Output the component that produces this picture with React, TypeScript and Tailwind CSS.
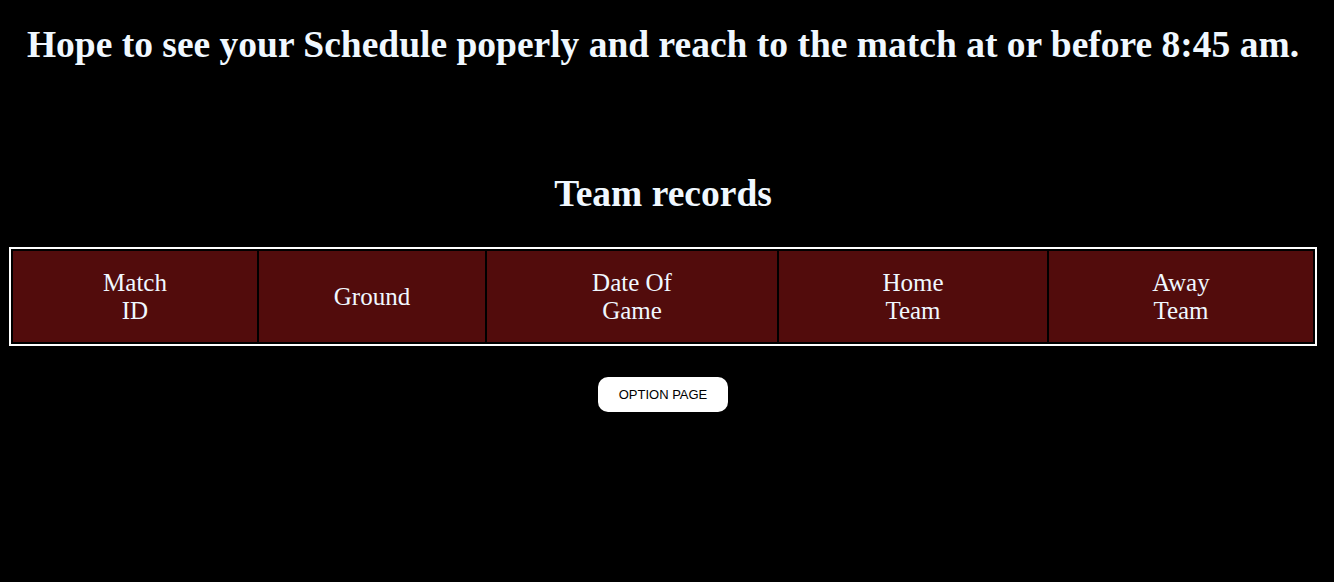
export default function App() {
  return (
    <div className="min-h-screen bg-black pt-[22px] text-center font-['Liberation_Serif',serif] text-[#f0f8ff]">
      <div className="ml-[9px] mr-[17px]">
        <h1 className="text-[37.5px] font-bold leading-[46px]">
          Hope to see your Schedule poperly and reach to the match at or before 8:45 am.
        </h1>
        <h2 className="mt-[103px] text-[37.5px] font-bold leading-[46px]">Team records</h2>
        <table className="mt-[30px] w-full border-2 border-separate border-white border-spacing-[2px] text-[25px] leading-[28px]">
          <tbody>
            <tr className="h-[91px] bg-[#520c0c]">
              <td className="w-[244px]">Match<br />ID</td>
              <td className="w-[226px]">Ground</td>
              <td className="w-[290px]">Date Of<br />Game</td>
              <td className="w-[268px]">Home<br />Team</td>
              <td>Away<br />Team</td>
            </tr>
          </tbody>
        </table>
        <div className="mt-[31px] flex justify-center">
          <button className="h-[35px] w-[130px] rounded-[10px] bg-white font-['Liberation_Sans',sans-serif] text-[13px] text-black">
            OPTION PAGE
          </button>
        </div>
      </div>
    </div>
  );
}
